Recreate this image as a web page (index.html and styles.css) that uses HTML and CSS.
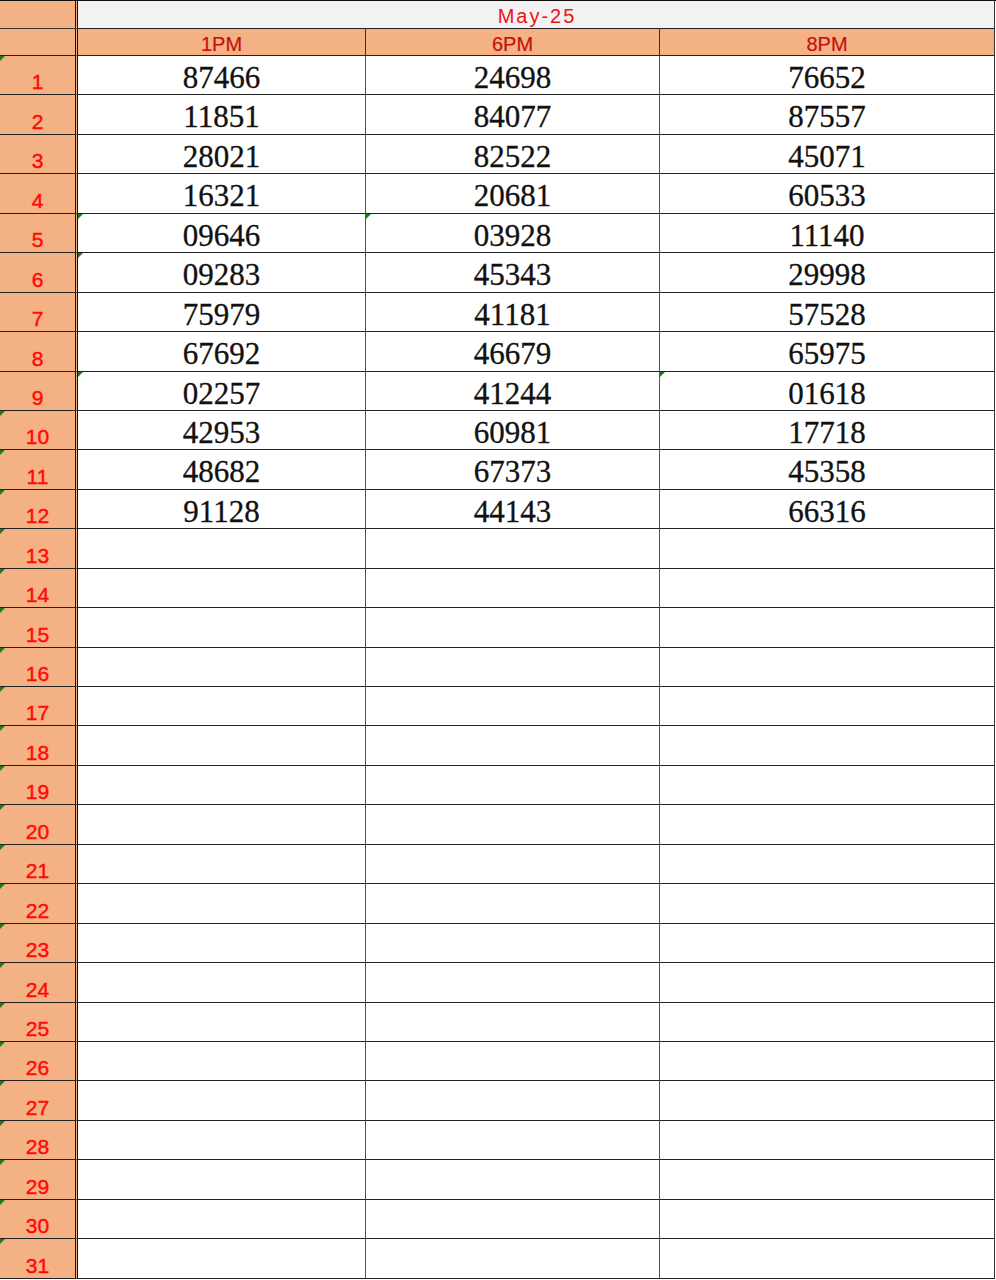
FILE: index.html
```html
<!DOCTYPE html>
<html>
<head>
<meta charset="utf-8">
<link rel="stylesheet" href="styles.css">
</head>
<body>
<div class="sheet">
  <div class="c rh top1"></div>
  <div class="c title">May-25</div>

  <div class="c rh"></div>
  <div class="c ch">1PM</div>
  <div class="c ch">6PM</div>
  <div class="c ch last">8PM</div>

  <div class="c rh mark">1</div><div class="c v">87466</div><div class="c v">24698</div><div class="c v last">76652</div>
  <div class="c rh">2</div><div class="c v">11851</div><div class="c v">84077</div><div class="c v last">87557</div>
  <div class="c rh">3</div><div class="c v">28021</div><div class="c v">82522</div><div class="c v last">45071</div>
  <div class="c rh">4</div><div class="c v">16321</div><div class="c v">20681</div><div class="c v last">60533</div>
  <div class="c rh">5</div><div class="c v mark">09646</div><div class="c v mark">03928</div><div class="c v last">11140</div>
  <div class="c rh">6</div><div class="c v mark">09283</div><div class="c v">45343</div><div class="c v last">29998</div>
  <div class="c rh">7</div><div class="c v">75979</div><div class="c v">41181</div><div class="c v last">57528</div>
  <div class="c rh">8</div><div class="c v">67692</div><div class="c v">46679</div><div class="c v last">65975</div>
  <div class="c rh">9</div><div class="c v mark">02257</div><div class="c v">41244</div><div class="c v last mark">01618</div>
  <div class="c rh mark">10</div><div class="c v">42953</div><div class="c v">60981</div><div class="c v last">17718</div>
  <div class="c rh mark">11</div><div class="c v">48682</div><div class="c v">67373</div><div class="c v last">45358</div>
  <div class="c rh mark">12</div><div class="c v">91128</div><div class="c v">44143</div><div class="c v last">66316</div>
  <div class="c rh mark">13</div><div class="c v"></div><div class="c v"></div><div class="c v last"></div>
  <div class="c rh mark">14</div><div class="c v"></div><div class="c v"></div><div class="c v last"></div>
  <div class="c rh mark">15</div><div class="c v"></div><div class="c v"></div><div class="c v last"></div>
  <div class="c rh mark">16</div><div class="c v"></div><div class="c v"></div><div class="c v last"></div>
  <div class="c rh mark">17</div><div class="c v"></div><div class="c v"></div><div class="c v last"></div>
  <div class="c rh mark">18</div><div class="c v"></div><div class="c v"></div><div class="c v last"></div>
  <div class="c rh mark">19</div><div class="c v"></div><div class="c v"></div><div class="c v last"></div>
  <div class="c rh mark">20</div><div class="c v"></div><div class="c v"></div><div class="c v last"></div>
  <div class="c rh mark">21</div><div class="c v"></div><div class="c v"></div><div class="c v last"></div>
  <div class="c rh mark">22</div><div class="c v"></div><div class="c v"></div><div class="c v last"></div>
  <div class="c rh mark">23</div><div class="c v"></div><div class="c v"></div><div class="c v last"></div>
  <div class="c rh mark">24</div><div class="c v"></div><div class="c v"></div><div class="c v last"></div>
  <div class="c rh mark">25</div><div class="c v"></div><div class="c v"></div><div class="c v last"></div>
  <div class="c rh mark">26</div><div class="c v"></div><div class="c v"></div><div class="c v last"></div>
  <div class="c rh mark">27</div><div class="c v"></div><div class="c v"></div><div class="c v last"></div>
  <div class="c rh mark">28</div><div class="c v"></div><div class="c v"></div><div class="c v last"></div>
  <div class="c rh mark">29</div><div class="c v"></div><div class="c v"></div><div class="c v last"></div>
  <div class="c rh mark">30</div><div class="c v"></div><div class="c v"></div><div class="c v last"></div>
  <div class="c rh mark">31</div><div class="c v"></div><div class="c v"></div><div class="c v last"></div>
</div>
</body>
</html>
```

FILE: styles.css
```css
html, body {
  margin: 0;
  padding: 0;
  background: #ffffff;
}

.sheet {
  width: 996px;
  display: grid;
  grid-template-columns: 78px 288px 294px 336px;
  grid-template-rows: 28px 27px repeat(31, 39.45px);
  border-top: 1px solid #111;
  box-sizing: border-box;
}

.c {
  box-sizing: border-box;
  position: relative;
  border-bottom: 1px solid #222;
  border-right: 1px solid #555;
  display: flex;
  justify-content: center;
  min-width: 0;
}

.last {
  border-right: 1px solid #333;
  margin-right: 1px;
}

.rh {
  background: #f4b183;
  border-right: 3px double #111;
  color: #ff0a0a;
  font-family: "Liberation Sans", Arial, sans-serif;
  font-size: 21px;
  font-weight: 400;
  -webkit-text-stroke: 0.45px #ff0a0a;
  align-items: flex-end;
  line-height: 22px;
  padding-bottom: 1px;
}

.top1 {
  border-bottom-color: #333;
}

.title {
  grid-column: 2 / 5;
  background: #f2f2f2;
  color: #f01018;
  font-family: "Liberation Sans", Arial, sans-serif;
  font-size: 20px;
  letter-spacing: 2px;
  line-height: 22px;
  align-items: flex-start;
  padding-top: 4px;
  padding-left: 2px;
  border-right: 1px solid #333;
  margin-right: 1px;
}

.ch {
  background: #f4b183;
  color: #c41010;
  font-family: "Liberation Sans", Arial, sans-serif;
  font-size: 20px;
  line-height: 22px;
  align-items: flex-start;
  padding-top: 4px;
  border-right-color: #333;
  -webkit-text-stroke: 0.2px #c41010;
}

.v {
  background: #ffffff;
  color: #111;
  font-family: "Liberation Serif", "Times New Roman", serif;
  font-size: 31px;
  line-height: 34px;
  align-items: flex-start;
  padding-top: 5px;
  -webkit-text-stroke: 0.3px #111;
}

.mark::before {
  content: "";
  position: absolute;
  left: 0;
  top: 0;
  width: 0;
  height: 0;
  border-top: 5px solid #1e7b1e;
  border-right: 5px solid transparent;
}
```
